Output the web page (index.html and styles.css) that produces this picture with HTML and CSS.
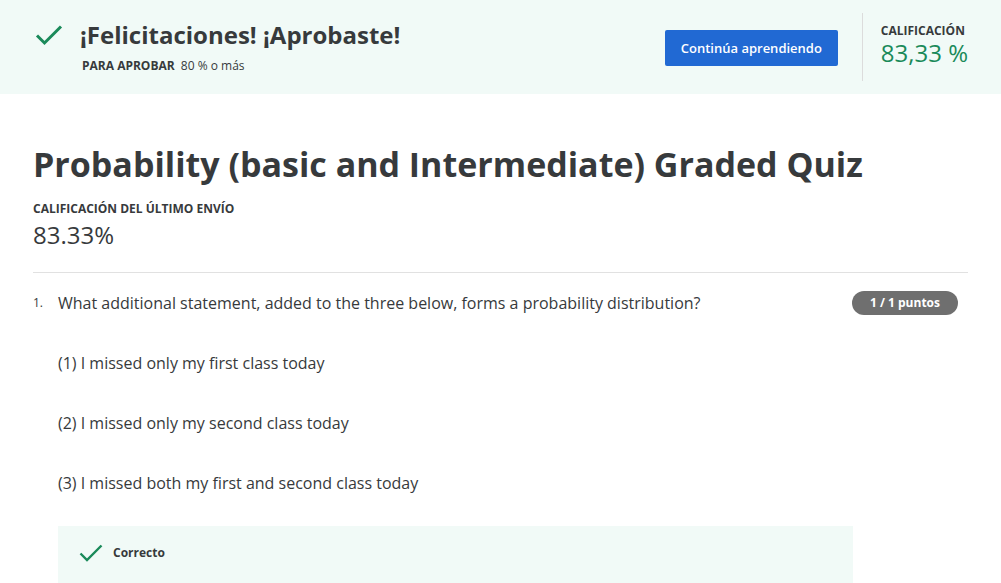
FILE: index.html
```html
<!DOCTYPE html>
<html lang="es">
<head>
<meta charset="utf-8">
<title>Probability Graded Quiz</title>
<link rel="stylesheet" href="styles.css">
</head>
<body>
<header class="banner">
  <div class="banner-left">
    <svg class="check-lg" width="28" height="22" viewBox="0 0 28 22" aria-hidden="true"><path d="M2 11.5 L9.5 19 L26 2.5" fill="none" stroke="#1a8a5a" stroke-width="3"/></svg>
    <div class="banner-text">
      <h2 class="congrats">¡Felicitaciones! ¡Aprobaste!</h2>
      <p class="pass-req"><span class="label">PARA APROBAR</span> 80 % o más</p>
    </div>
  </div>
  <div class="banner-right">
    <button class="btn-primary">Continúa aprendiendo</button>
    <div class="divider"></div>
    <div class="grade">
      <div class="label">CALIFICACIÓN</div>
      <div class="grade-value">83,33 %</div>
    </div>
  </div>
</header>
<main class="content">
  <h1 class="quiz-title">Probability (basic and Intermediate) Graded Quiz</h1>
  <div class="label last-label">CALIFICACIÓN DEL ÚLTIMO ENVÍO</div>
  <div class="last-grade">83.33%</div>
  <hr class="sep">
  <section class="question">
    <div class="q-num">1.</div>
    <div class="q-body">
      <div class="q-head">
        <p class="q-text">What additional statement, added to the three below, forms a probability distribution?</p>
        <span class="badge">1 / 1 puntos</span>
      </div>
      <p class="q-line">(1) I missed only my first class today</p>
      <p class="q-line">(2) I missed only my second class today</p>
      <p class="q-line">(3) I missed both my first and second class today</p>
      <div class="feedback">
        <svg class="check-sm" width="24" height="18" viewBox="0 0 24 18" aria-hidden="true"><path d="M1.5 9.5 L8 16 L22.5 1.5" fill="none" stroke="#1a8a5a" stroke-width="2.4"/></svg>
        <span class="feedback-text">Correcto</span>
      </div>
    </div>
  </section>
</main>
</body>
</html>
```

FILE: styles.css
```css
* { box-sizing: border-box; }
html, body { margin: 0; padding: 0; }
body {
  font-family: "Open Sans", "Noto Sans", sans-serif;
  color: #373a3c;
  background: #fff;
  overflow: hidden;
}
p, h1, h2 { margin: 0; }

.banner {
  height: 94px;
  background: #f1faf7;
  display: flex;
  justify-content: space-between;
  align-items: center;
  padding: 0 33px 0 35px;
}
.banner-left {
  display: flex;
  align-items: flex-start;
  gap: 17px;
  margin-top: -2px;
}
.check-lg { margin-top: 5px; }
.congrats {
  font-size: 24px;
  font-weight: 700;
  line-height: 32px;
  color: #373a3c;
}
.pass-req {
  font-size: 12px;
  line-height: 16px;
  margin-top: 7px;
  padding-left: 2px;
}
.label {
  font-size: 12px;
  font-weight: 700;
  line-height: 16px;
  text-transform: uppercase;
  color: #373a3c;
}
.pass-req .label { margin-right: 3px; }

.banner-right {
  display: flex;
  align-items: center;
  height: 100%;
}
.btn-primary {
  font-family: inherit;
  background: #2169d3;
  color: #fff;
  border: none;
  border-radius: 2px;
  font-size: 13px;
  font-weight: 600;
  height: 36px;
  width: 173px;
  padding: 0;
  margin-top: 2px;
}
.divider {
  width: 1px;
  height: 68px;
  background: #dcdcdc;
  margin: 0 18px 0 24px;
}
.grade {
  margin-top: -6px;
  display: flex;
  flex-direction: column;
  gap: 2px;
}
.grade-value {
  font-size: 24px;
  line-height: 24px;
  color: #1a8a5a;
}

.content {
  padding: 0 33px;
}
.quiz-title {
  font-size: 34px;
  font-weight: 700;
  line-height: 44px;
  margin-top: 48px;
  color: #373a3c;
}
.last-label { margin-top: 15px; }
.last-grade {
  font-size: 24px;
  line-height: 32px;
  font-weight: 400;
  margin-top: 2px;
}
.sep {
  border: none;
  border-top: 1px solid #e1e1e1;
  margin: 21px 0 0;
}
.question {
  display: flex;
  margin-top: 18px;
}
.q-num {
  width: 25px;
  font-size: 12px;
  line-height: 24px;
}
.q-body { flex: 1; }
.q-head {
  display: flex;
  justify-content: space-between;
  align-items: flex-start;
  padding-right: 10px;
}
.q-text {
  font-size: 16px;
  line-height: 24px;
}
.badge {
  background: #6f6f6f;
  color: #fff;
  font-size: 12px;
  font-weight: 700;
  line-height: 24px;
  height: 24px;
  width: 106px;
  text-align: center;
  border-radius: 12px;
  margin-top: 0;
}
.q-line {
  font-size: 16px;
  line-height: 24px;
  margin-top: 36px;
}
.feedback {
  margin-top: 31px;
  width: 795px;
  height: 60px;
  background: #f1faf7;
  display: flex;
  align-items: flex-start;
  gap: 10px;
  padding: 18px 0 0 21px;
}
.check-sm { margin-top: 0; }
.feedback-text {
  font-size: 12px;
  font-weight: 700;
  line-height: 18px;
}
```
